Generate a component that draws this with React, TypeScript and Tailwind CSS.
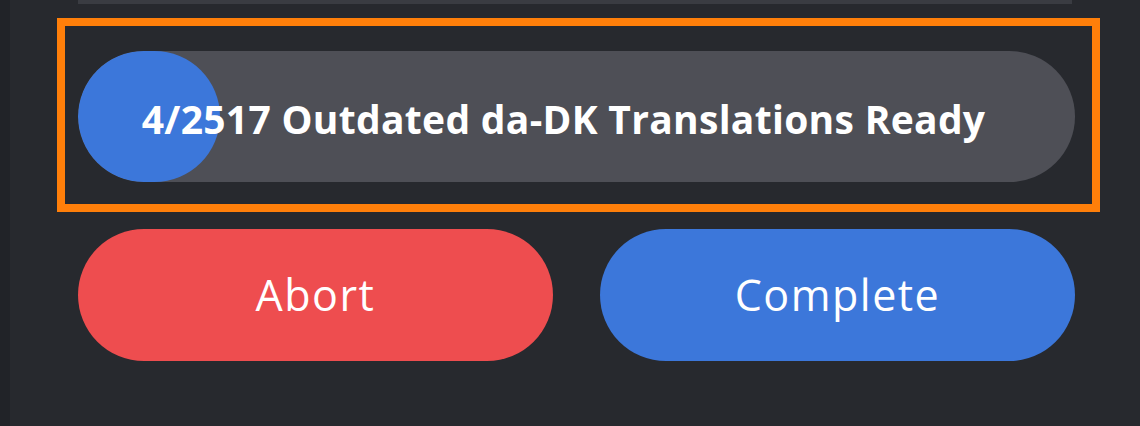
const font = { fontFamily: "'Open Sans', Lato, sans-serif" };

export default function App() {
  return (
    <div className="relative h-[426px] w-[1140px] overflow-hidden bg-[#212328]" style={font}>
      <div className="ml-[10px] h-[470px] rounded-bl-[40px] bg-[#27292e] pl-[68px]">
        <div className="h-[4px] w-[994px] bg-[#3a3c42]" />

        <div className="relative mt-[47px] h-[131px] w-[997px]">
          <span className="pointer-events-none absolute -bottom-[30px] -left-[21px] -right-[25px] -top-[33px] border-[8px] border-[#ff7f0a]" />
          <div className="relative h-full w-full overflow-hidden rounded-full bg-[#4e4f56]">
            <div className="h-full w-[142px] rounded-full bg-[#3c77da]" />
            <div className="absolute inset-0 flex items-center justify-center pr-[26px] pt-[6px] text-[39px] font-bold tracking-[0.3px] text-white">
              4/2517 Outdated da-DK Translations Ready
            </div>
          </div>
        </div>

        <div className="mt-[47px] flex w-[997px] gap-[47px]">
          <button className="flex h-[132px] w-[475px] items-center justify-center rounded-full bg-[#ee4d4f] text-[43px] tracking-[1.5px] text-white">
            Abort
          </button>
          <button className="flex h-[132px] w-[475px] items-center justify-center rounded-full bg-[#3c77da] text-[43px] tracking-[1.5px] text-white">
            Complete
          </button>
        </div>
      </div>
    </div>
  );
}
